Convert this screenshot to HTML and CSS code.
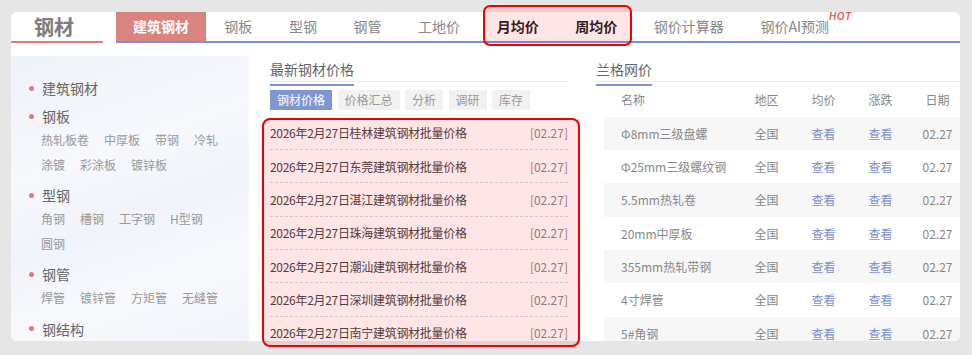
FILE: index.html
```html
<!DOCTYPE html>
<html lang="zh-CN">
<head>
<meta charset="utf-8">
<title>钢材</title>
<link rel="stylesheet" href="styles.css">
</head>
<body>
<div class="shot">
  <div class="card">
    <header class="nav">
      <div class="brand">钢材</div>
      <nav class="menu">
        <a class="item active">建筑钢材</a>
        <a class="item">钢板</a>
        <a class="item">型钢</a>
        <a class="item">钢管</a>
        <a class="item">工地价</a>
        <a class="item strong">月均价</a>
        <a class="item strong">周均价</a>
        <a class="item">钢价计算器</a>
        <a class="item"><span class="lbl">钢价AI预测<sup class="hot-tag">HOT</sup></span></a>
      </nav>
    </header>
    <div class="body">
      <aside class="side">
        <div class="group">
          <div class="cat">建筑钢材</div>
        </div>
        <div class="group">
          <div class="cat">钢板</div>
          <div class="subs"><span>热轧板卷</span><span>中厚板</span><span>带钢</span><span>冷轧</span><span>涂镀</span><span>彩涂板</span><span>镀锌板</span></div>
        </div>
        <div class="group">
          <div class="cat">型钢</div>
          <div class="subs"><span>角钢</span><span>槽钢</span><span>工字钢</span><span>H型钢</span><span>圆钢</span></div>
        </div>
        <div class="group">
          <div class="cat">钢管</div>
          <div class="subs"><span>焊管</span><span>镀锌管</span><span>方矩管</span><span>无缝管</span></div>
        </div>
        <div class="group">
          <div class="cat">钢结构</div>
        </div>
      </aside>
      <section class="mid">
        <div class="sec-head"><span class="sec-title">最新钢材价格</span></div>
        <div class="tabs">
          <span class="tab on">钢材价格</span>
          <span class="tab">价格汇总</span>
          <span class="tab">分析</span>
          <span class="tab">调研</span>
          <span class="tab">库存</span>
        </div>
        <ul class="list">
          <li><span class="t">2026年2月27日桂林建筑钢材批量价格</span><span class="d">[02.27]</span></li>
          <li><span class="t">2026年2月27日东莞建筑钢材批量价格</span><span class="d">[02.27]</span></li>
          <li><span class="t">2026年2月27日湛江建筑钢材批量价格</span><span class="d">[02.27]</span></li>
          <li><span class="t">2026年2月27日珠海建筑钢材批量价格</span><span class="d">[02.27]</span></li>
          <li><span class="t">2026年2月27日潮汕建筑钢材批量价格</span><span class="d">[02.27]</span></li>
          <li><span class="t">2026年2月27日深圳建筑钢材批量价格</span><span class="d">[02.27]</span></li>
          <li><span class="t">2026年2月27日南宁建筑钢材批量价格</span><span class="d">[02.27]</span></li>
        </ul>
      </section>
      <section class="right">
        <div class="sec-head"><span class="sec-title">兰格网价</span></div>
        <div class="table">
          <div class="row head"><span class="name">名称</span><span>地区</span><span>均价</span><span>涨跌</span><span>日期</span></div>
          <div class="row odd"><span class="name">Φ8mm三级盘螺</span><span>全国</span><span class="lnk">查看</span><span class="lnk">查看</span><span>02.27</span></div>
          <div class="row"><span class="name">Φ25mm三级螺纹钢</span><span>全国</span><span class="lnk">查看</span><span class="lnk">查看</span><span>02.27</span></div>
          <div class="row odd"><span class="name">5.5mm热轧卷</span><span>全国</span><span class="lnk">查看</span><span class="lnk">查看</span><span>02.27</span></div>
          <div class="row"><span class="name">20mm中厚板</span><span>全国</span><span class="lnk">查看</span><span class="lnk">查看</span><span>02.27</span></div>
          <div class="row odd"><span class="name">355mm热轧带钢</span><span>全国</span><span class="lnk">查看</span><span class="lnk">查看</span><span>02.27</span></div>
          <div class="row"><span class="name">4寸焊管</span><span>全国</span><span class="lnk">查看</span><span class="lnk">查看</span><span>02.27</span></div>
          <div class="row odd"><span class="name">5#角钢</span><span>全国</span><span class="lnk">查看</span><span class="lnk">查看</span><span>02.27</span></div>
        </div>
      </section>
    </div>
  </div>
  <div class="mark mark-nav"></div>
  <div class="mark mark-list"></div>
</div>
</body>
</html>
```

FILE: styles.css
```css
* { box-sizing: border-box; }
html, body {
  margin: 0;
  padding: 0;
  background: #e6e6e6;
  font-family: "Noto Sans CJK SC", "Noto Sans", sans-serif;
}
.shot {
  position: relative;
  width: 972px;
  height: 355px;
  padding: 12px 12px 0 11px;
}
.card {
  width: 949px;
  height: 329px;
  background: #fff;
  border-radius: 6px;
  overflow: hidden;
}

/* nav */
.nav {
  display: flex;
  height: 31px;
}
.brand {
  width: 92px;
  flex: 0 0 92px;
  height: 31px;
  border-bottom: 2px solid #e07b7b;
  text-align: center;
  padding-right: 6px;
  font-size: 20px;
  line-height: 29px;
  font-weight: bold;
  color: #7d7d7d;
}
.menu {
  display: flex;
  flex: 1;
  margin-left: 13px;
  border-bottom: 2px solid #7c8fd8;
  height: 31px;
}
.item {
  display: block;
  height: 29px;
  line-height: 29px;
  padding: 0 18.3px;
  font-size: 14px;
  color: #888;
  white-space: nowrap;
}
.item.active {
  background: #d9847f;
  color: #fff;
  font-weight: bold;
  padding: 0 17px;
}
.item.strong {
  color: #222;
  font-weight: bold;
}
.lbl {
  position: relative;
}
.hot-tag {
  position: absolute;
  left: 100%;
  top: -4px;
  font-family: "Liberation Sans", sans-serif;
  font-size: 10px;
  line-height: 10px;
  font-style: italic;
  font-weight: bold;
  color: #e06464;
  letter-spacing: 0.5px;
}

/* body */
.body {
  display: flex;
  padding-top: 13px;
  height: 298px;
}
.side {
  flex: 0 0 238px;
  width: 238px;
  background: linear-gradient(160deg, #eef2f9 0%, #f6f8fc 35%, #f0f3fa 55%, #f8f9fd 75%, #f1f4fa 100%);
  padding: 18px 0 0 18px;
}
.cat {
  display: flex;
  align-items: center;
  height: 28px;
  font-size: 14px;
  color: #666;
}
.cat::before {
  content: "";
  width: 5px;
  height: 5px;
  border-radius: 50%;
  background: #e07b7b;
  margin-right: 8px;
}
.subs {
  display: flex;
  flex-wrap: wrap;
  column-gap: 15px;
  width: 197px;
  padding-left: 12px;
  margin-top: -2px;
  margin-bottom: 4px;
  font-size: 12px;
  line-height: 24.5px;
  color: #999;
}

.mid {
  flex: 0 0 298px;
  width: 298px;
  margin-left: 21px;
}
.right {
  flex: 0 0 372px;
  width: 372px;
  margin-left: 28px;
}
.sec-head {
  height: 26px;
  border-bottom: 1px solid #ececec;
}
.sec-title {
  display: inline-block;
  font-size: 14px;
  line-height: 18px;
  padding-bottom: 6px;
  border-bottom: 2px solid #7b93d6;
  color: #666;
}
.tabs {
  display: flex;
  gap: 5.5px;
  margin-top: 8px;
}
.tab {
  height: 20px;
  line-height: 20px;
  padding: 0 7px;
  font-size: 12px;
  background: #f1f1f1;
  color: #999;
}
.tab.on {
  background: #7f96d5;
  color: #fff;
}
.list {
  list-style: none;
  margin: 6.7px 0 0;
  padding: 0;
}
.list li {
  display: flex;
  justify-content: space-between;
  align-items: center;
  height: 33.33px;
  border-bottom: 1px dashed #dcdcdc;
  font-size: 12px;
}
.list .t { color: #444; letter-spacing: -0.3px; }
.list .d { color: #8a8a8a; }

.table { margin-left: 8px; }
.row {
  display: grid;
  grid-template-columns: 134px 57px 57px 57px 57px;
  align-items: center;
  height: 33.33px;
  font-size: 12px;
  color: #888;
  text-align: center;
}
.row.head { height: 34.67px; }
.row.odd { background: #f7f7f7; }
.row .name {
  text-align: left;
  padding-left: 17px;
}
.row .lnk { color: #7d8fd0; }

/* annotation overlays */
.mark {
  position: absolute;
  border: 2px solid #f00000;
  background: rgba(255, 0, 0, 0.1);
}
.mark-nav {
  left: 483px;
  top: 5px;
  width: 149px;
  height: 41px;
  border-radius: 7px;
}
.mark-list {
  left: 262px;
  top: 118px;
  width: 318px;
  height: 229px;
  border-radius: 8px;
}
```
